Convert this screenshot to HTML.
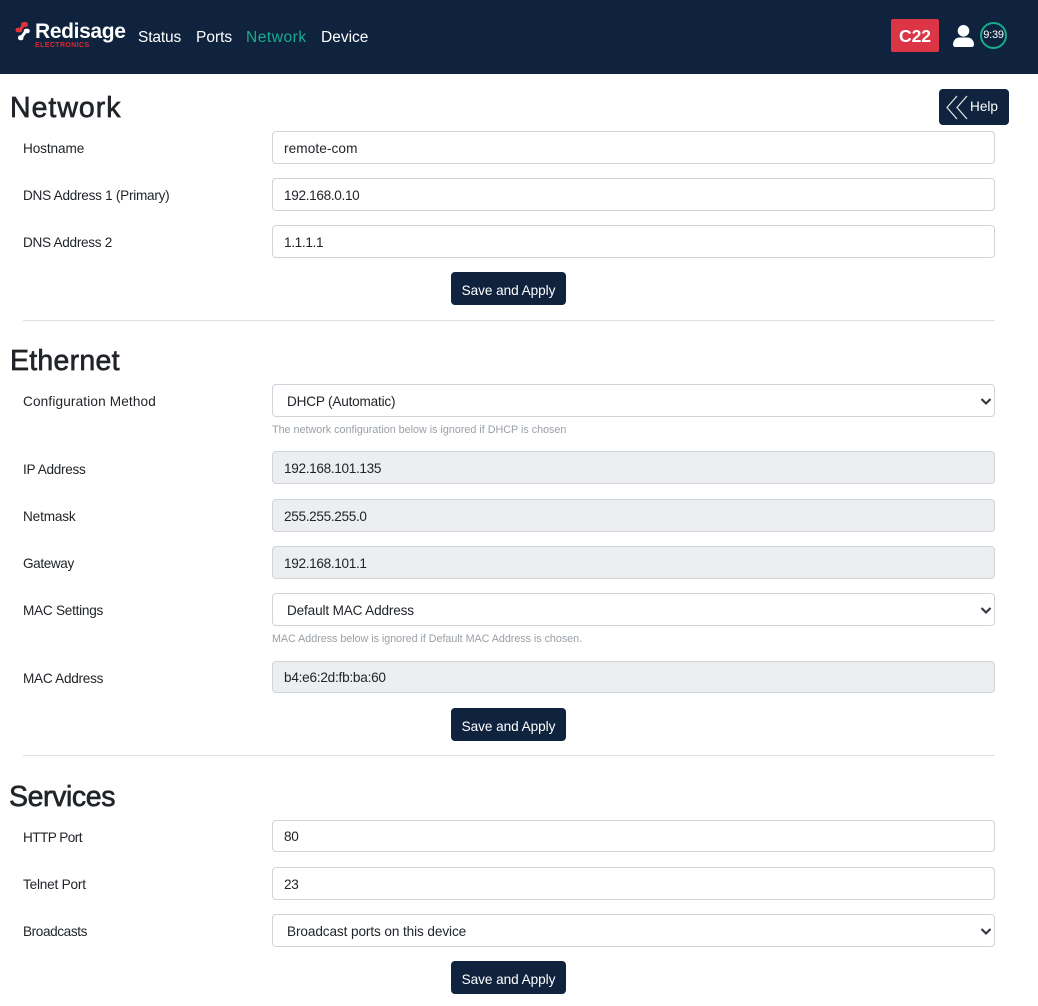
<!DOCTYPE html>
<html lang="en">
<head>
<meta charset="utf-8">
<title>Network</title>
<style>
html,body{margin:0;padding:0;background:#fff}
body{width:1038px;height:1006px;position:relative;overflow:hidden;font-family:"Liberation Sans",sans-serif;font-size:14px;color:#212529}
.a{position:absolute;white-space:nowrap}
.nav{background:#0f233e;left:0;top:0;width:1038px;height:74px}
.link{top:29px;font-size:15.5px;line-height:18px;color:#fff}
h1{position:absolute;margin:0;font-size:28.5px;line-height:34px;font-weight:400;color:#212529;white-space:nowrap;-webkit-text-stroke:.65px #212529}
.lb{position:absolute;left:23px;font-size:13.6px;line-height:18px;white-space:nowrap;color:#212529;margin-top:1px}
.f{position:absolute;left:272px;width:721px;height:31px;border:1px solid #ced4da;border-radius:4px;background:#fff;font-size:13.6px;line-height:33px;color:#212529;white-space:nowrap;text-indent:11px}
.f.d{background:#eceef0}
.f.s{text-indent:14px}
.f.s svg{position:absolute;right:0;top:9px}
.n{letter-spacing:-.33px}
.btn{position:absolute;left:451px;width:115px;height:33px;background:#0f233e;border-radius:4px;color:#fff;font-size:13.6px;line-height:37px;text-align:center;white-space:nowrap;letter-spacing:-.05px}
.hr{position:absolute;left:23px;width:972px;height:1px;background:#dfe1e3}
.hint{position:absolute;left:272px;font-size:10.75px;line-height:14px;color:#9aa0a6;white-space:nowrap}
</style>
</head>
<body>
<div class="a nav"></div>

<svg class="a" style="left:14px;top:20px" width="18" height="24" viewBox="0 0 18 24">
<path d="M9.500 4.500H11.500" stroke="#e0333c" stroke-width="5" stroke-linecap="round" fill="none"/>
<path d="M3.800 10H6" stroke="#e0333c" stroke-width="4.600" stroke-linecap="round" fill="none"/>
<path d="M10 4.500L6 10" stroke="#e0333c" stroke-width="3" fill="none"/>
<path d="M12 11H13.500" stroke="#fff" stroke-width="4.600" stroke-linecap="round" fill="none"/>
<path d="M6.500 17.800H7" stroke="#fff" stroke-width="5" stroke-linecap="round" fill="none"/>
<path d="M12 11L7 17.800" stroke="#fff" stroke-width="3" fill="none"/>
</svg>
<div class="a" style="left:35px;top:19px;font-size:21px;line-height:26px;font-weight:700;color:#fff;letter-spacing:-.35px">Redisage</div>
<div class="a" style="left:35px;top:41px;font-size:7px;line-height:9px;font-weight:700;color:#e0282f;letter-spacing:.4px">ELECTRONICS</div>

<div class="a link" style="left:138px;letter-spacing:-.15px">Status</div>
<div class="a link" style="left:196px">Ports</div>
<div class="a link" style="left:246px;color:#17ad8c;letter-spacing:.55px">Network</div>
<div class="a link" style="left:321px">Device</div>

<div class="a" style="left:891px;top:19px;width:48px;height:33px;background:#dc3545;border-radius:2px;color:#fff;font-size:17.5px;font-weight:700;line-height:34px;text-align:center">C22</div>
<svg class="a" style="left:952px;top:24px" width="23" height="23" viewBox="0 0 23 23">
<circle cx="11.500" cy="6.800" r="5.800" fill="#fff"/>
<path d="M1 20.500c0-4 3-7 6.500-7h8c3.500 0 6.500 3 6.500 7c0 1.500-1 2.500-2.500 2.500h-16c-1.500 0-2.500-1-2.500-2.500z" fill="#fff"/>
</svg>
<svg class="a" style="left:979px;top:21px" width="29" height="29" viewBox="0 0 29 29">
<circle cx="14.500" cy="14.500" r="12.500" fill="none" stroke="#17ad8c" stroke-width="2"/>
</svg>
<div class="a" style="left:979px;top:21px;width:29px;text-align:center;font-size:11px;line-height:29px;color:#fff;letter-spacing:-.2px">9:39</div>

<h1 style="left:10px;top:91px;letter-spacing:1px">Network</h1>
<div class="a" style="left:939px;top:89px;width:70px;height:36px;background:#0f233e;border-radius:4px"></div>
<svg class="a" style="left:945px;top:95px" width="24" height="25" viewBox="0 0 24 25">
<path d="M12 1L2 12.500 12 24M22 1L12 12.500 22 24" fill="none" stroke="#e8e8e8" stroke-width="1.200"/>
</svg>
<div class="a" style="left:970px;top:98px;font-size:13.600px;line-height:18px;color:#fff">Help</div>

<div class="lb" style="top:139px;letter-spacing:-.1px">Hostname</div>
<div class="f" style="top:131px;letter-spacing:.1px">remote-com</div>
<div class="lb" style="top:186px;letter-spacing:-.27px">DNS Address 1 (Primary)</div>
<div class="f n" style="top:178px">192.168.0.10</div>
<div class="lb" style="top:233px;letter-spacing:-.3px">DNS Address 2</div>
<div class="f n" style="top:225px">1.1.1.1</div>
<div class="btn" style="top:272px">Save and Apply</div>
<div class="hr" style="top:320px"></div>

<h1 style="left:10px;top:344px;letter-spacing:.25px">Ethernet</h1>
<div class="lb" style="top:392px;letter-spacing:.15px">Configuration Method</div>
<div class="f s" style="top:384px;letter-spacing:-.2px">DHCP (Automatic)<svg width="16" height="14" viewBox="0 0 16 14"><path d="M3.500 5l4.500 4.500 4.500-4.500" fill="none" stroke="#343a40" stroke-width="2.200"/></svg></div>
<div class="hint" style="top:423px">The network configuration below is ignored if DHCP is chosen</div>
<div class="lb" style="top:460px;letter-spacing:-.3px">IP Address</div>
<div class="f d n" style="top:451px">192.168.101.135</div>
<div class="lb" style="top:507px;letter-spacing:-.15px">Netmask</div>
<div class="f d n" style="top:499px">255.255.255.0</div>
<div class="lb" style="top:554px;letter-spacing:-.4px">Gateway</div>
<div class="f d n" style="top:546px">192.168.101.1</div>
<div class="lb" style="top:601px;letter-spacing:-.25px">MAC Settings</div>
<div class="f s" style="top:593px;letter-spacing:-.16px">Default MAC Address<svg width="16" height="14" viewBox="0 0 16 14"><path d="M3.500 5l4.500 4.500 4.500-4.500" fill="none" stroke="#343a40" stroke-width="2.200"/></svg></div>
<div class="hint" style="top:632px;letter-spacing:-.03px">MAC Address below is ignored if Default MAC Address is chosen.</div>
<div class="lb" style="top:669px;letter-spacing:-.27px">MAC Address</div>
<div class="f d" style="top:661px;height:30px;line-height:32px;letter-spacing:-.24px">b4:e6:2d:fb:ba:60</div>
<div class="btn" style="top:708px">Save and Apply</div>
<div class="hr" style="top:755px"></div>

<h1 style="left:9px;top:780px;letter-spacing:-.4px">Services</h1>
<div class="lb" style="top:828px;letter-spacing:-.55px">HTTP Port</div>
<div class="f n" style="top:820px;height:30px;line-height:32px">80</div>
<div class="lb" style="top:875px;letter-spacing:-.2px">Telnet Port</div>
<div class="f n" style="top:867px">23</div>
<div class="lb" style="top:922px;letter-spacing:-.4px">Broadcasts</div>
<div class="f s" style="top:914px;letter-spacing:-.1px">Broadcast ports on this device<svg width="16" height="14" viewBox="0 0 16 14"><path d="M3.500 5l4.500 4.500 4.500-4.500" fill="none" stroke="#343a40" stroke-width="2.200"/></svg></div>
<div class="btn" style="top:961px">Save and Apply</div>
</body>
</html>
